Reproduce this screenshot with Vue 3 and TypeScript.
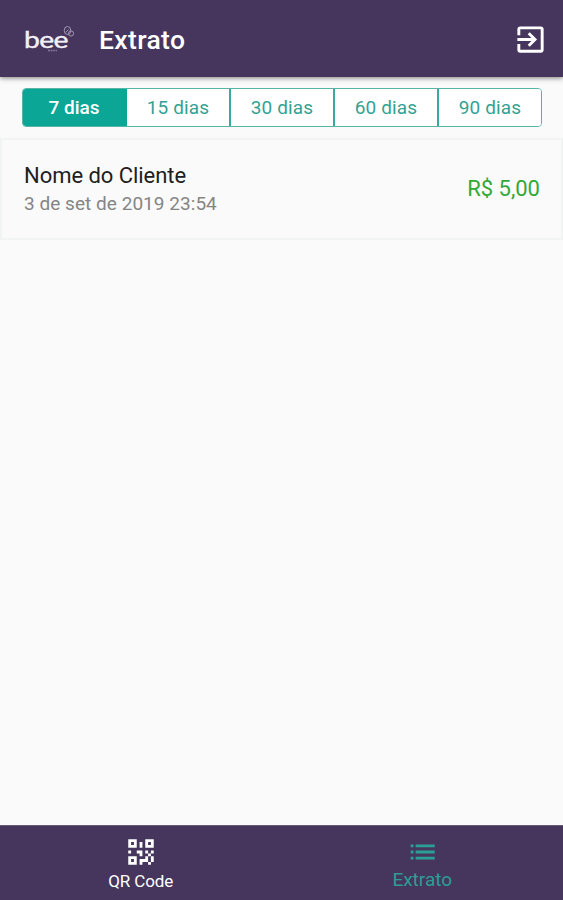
<script setup lang="ts">
import { ref } from 'vue'

interface Entry {
  name: string
  date: string
  amount: string
}

const periods: number[] = [7, 15, 30, 60, 90]
const selected = ref<number>(7)
const entries: Entry[] = [
  { name: 'Nome do Cliente', date: '3 de set de 2019 23:54', amount: 'R$ 5,00' },
]
</script>

<template>
  <div class="screen">
    <header class="topbar">
      <div class="logo">
        <span class="logo-word">bee</span>
        <svg class="logo-mark" viewBox="0 0 52 32">
          <g fill="none" stroke="#a196b2" stroke-width="1">
            <ellipse cx="43.500" cy="7.500" rx="3.300" ry="4" />
            <circle cx="47" cy="10.500" r="2.600" />
            <path d="M41.500 9.500l3-3" />
          </g>
          <path d="M24 27.500h9" stroke="#82759a" stroke-width="1.600" stroke-dasharray="2 .6" />
        </svg>
      </div>
      <h1 class="title">Extrato</h1>
      <svg class="exit" viewBox="0 0 24 24">
        <path d="M19 3H5a2 2 0 0 0-2 2v4h2V5h14v14H5v-4H3v4a2 2 0 0 0 2 2h14a2 2 0 0 0 2-2V5a2 2 0 0 0-2-2m-8.920 12.580L11.500 17l5-5-5-5-1.420 1.410L12.670 11H3v2h9.670z" />
      </svg>
    </header>

    <main class="content">
      <div class="segments">
        <button
          v-for="p in periods"
          :key="p"
          class="segment"
          :class="{ active: p === selected }"
          @click="selected = p"
        >{{ p }} dias</button>
      </div>
      <article v-for="e in entries" :key="e.date" class="entry">
        <div>
          <div class="name">{{ e.name }}</div>
          <div class="date">{{ e.date }}</div>
        </div>
        <div class="amount">{{ e.amount }}</div>
      </article>
    </main>

    <nav class="tabs">
      <a class="tab">
        <svg class="tab-icon" viewBox="0 0 24 24">
          <path fill-rule="evenodd" d="M3 11h2v2H3v-2m8-6h2v4h-2V5m-2 6h4v4h-2v-2H9v-2m6 0h2v2h2v-2h2v2h-2v2h2v4h-2v2h-2v-2h-4v2h-2v-4h4v-2h2v-2h-2v-2m4 8v-4h-2v4h2M15 3h6v6h-6V3m2 2v2h2V5h-2M3 3h6v6H3V3m2 2v2h2V5H5M3 15h6v6H3v-6m2 2v2h2v-2H5z" />
        </svg>
        <span class="qr-label">QR Code</span>
      </a>
      <a class="tab current">
        <svg class="tab-icon" viewBox="0 0 24 24">
          <path d="M4 13h2v-2H4v2zm0 4.300h2v-2H4v2zm0-8.600h2v-2H4v2zM7.500 13H21v-2H7.500v2zm0 4.300H21v-2H7.500v2zm0-10.600v2H21v-2H7.500z" />
        </svg>
        <span class="list-label">Extrato</span>
      </a>
    </nav>
  </div>
</template>

<style>
body {
  background: #fafafa;
}
</style>

<style scoped>
.screen {
  display: flex;
  flex-direction: column;
  height: 900px;
  background: #fafafa;
  font-family: Roboto, sans-serif;
}
.topbar {
  display: flex;
  align-items: center;
  box-sizing: border-box;
  height: 77px;
  padding: 0 15px 0 24px;
  background: #46365d;
  box-shadow: 0 1px 5px rgba(0, 0, 0, 0.5);
  z-index: 1;
}
.logo {
  position: relative;
  width: 52px;
  height: 32px;
}
.logo-word {
  display: block;
  width: max-content;
  font-family: Lato, sans-serif;
  font-size: 24px;
  line-height: 31px;
  letter-spacing: -0.6px;
  color: #f4f0f7;
  -webkit-text-stroke: 0.4px #f4f0f7;
  transform: scaleX(1.18);
  transform-origin: left;
}
.logo-mark {
  position: absolute;
  left: 0;
  top: 0;
  width: 52px;
  height: 32px;
}
.title {
  flex: 1;
  margin: 3px 0 0 23px;
  font-size: 26.5px;
  line-height: 32px;
  font-weight: 500;
  letter-spacing: 0.35px;
  color: #fff;
}
.exit {
  width: 35px;
  height: 35px;
  margin-top: 1px;
  fill: #fff;
}
.content {
  flex: 1;
}
.segments {
  display: flex;
  box-sizing: border-box;
  width: 520px;
  height: 39px;
  margin: 11px 0;
  overflow: hidden;
  margin-left: 22px;
  border: 1px solid #56b5a7;
  border-radius: 4px;
  background: #fff;
}
.segment {
  flex: 1;
  padding: 0;
  border: 0;
  border-right: 2px solid #39a99b;
  background: #fff;
  color: #32a294;
  font-family: inherit;
  font-size: 19px;
  letter-spacing: 0.15px;
}
.segment:last-child {
  border-right: 0;
}
.segment.active {
  border-right-color: #0ba696;
  background: #0ba696;
  color: #fff;
  font-weight: 500;
  letter-spacing: 0;
}
.entry {
  display: flex;
  align-items: center;
  justify-content: space-between;
  box-sizing: border-box;
  height: 102px;
  padding: 0 21px 0 22px;
  border: 2px solid #f2f3f3;
}
.name {
  font-size: 22px;
  line-height: 29px;
  letter-spacing: -0.05px;
  color: #202020;
}
.date {
  font-size: 19px;
  line-height: 27px;
  letter-spacing: 0.04px;
  color: #858585;
}
.amount {
  padding-bottom: 2px;
  font-size: 22px;
  color: #32a936;
}
.tabs {
  display: flex;
  box-sizing: border-box;
  height: 75px;
  background: #46365d;
  border-top: 1px solid #665a78;
}
.tab {
  flex: 1;
  display: flex;
  flex-direction: column;
  align-items: center;
  padding-top: 9px;
  color: #fff;
}
.tab-icon {
  width: 34px;
  height: 34px;
  fill: currentColor;
}
.current {
  color: #2b9f95;
}
.qr-label {
  margin-top: 1px;
  font-size: 17px;
  line-height: 22px;
  letter-spacing: -0.1px;
}
.list-label {
  margin-top: -1px;
  font-size: 19px;
  line-height: 23px;
}
</style>
